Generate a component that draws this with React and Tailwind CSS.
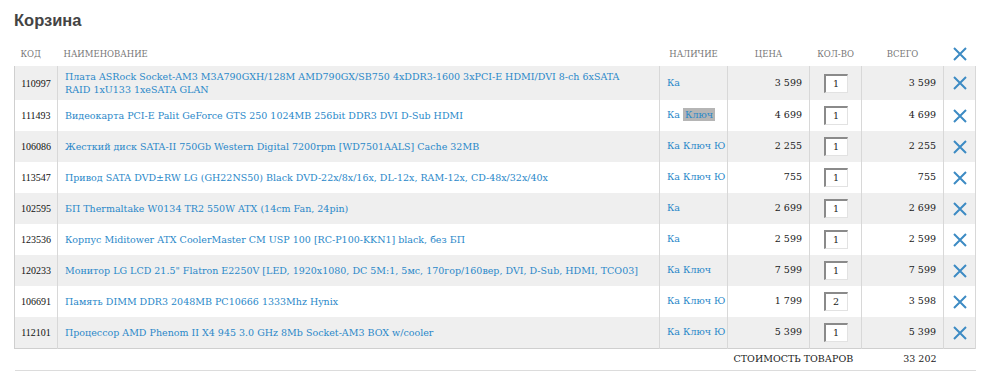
import React from "react";

const rows = [
  { code: "110997", name: "Плата ASRock Socket-AM3 M3A790GXH/128M AMD790GX/SB750 4xDDR3-1600 3xPCI-E HDMI/DVI 8-ch 6xSATA", name2: "RAID 1xU133 1xeSATA GLAN", av: ["Ка"], price: "3 599", qty: "1", total: "3 599", tall: true },
  { code: "111493", name: "Видеокарта PCI-E Palit GeForce GTS 250 1024MB 256bit DDR3 DVI D-Sub HDMI", av: ["Ка", "Ключ*"], price: "4 699", qty: "1", total: "4 699" },
  { code: "106086", name: "Жесткий диск SATA-II 750Gb Western Digital 7200rpm [WD7501AALS] Cache 32MB", av: ["Ка", "Ключ", "Ю"], price: "2 255", qty: "1", total: "2 255" },
  { code: "113547", name: "Привод SATA DVD±RW LG (GH22NS50) Black DVD-22x/8x/16x, DL-12x, RAM-12x, CD-48x/32x/40x", av: ["Ка", "Ключ", "Ю"], price: "755", qty: "1", total: "755" },
  { code: "102595", name: "БП Thermaltake W0134 TR2 550W ATX (14cm Fan, 24pin)", av: ["Ка"], price: "2 699", qty: "1", total: "2 699" },
  { code: "123536", name: "Корпус Miditower ATX CoolerMaster CM USP 100 [RC-P100-KKN1] black, без БП", av: ["Ка"], price: "2 599", qty: "1", total: "2 599" },
  { code: "120233", name: "Монитор LG LCD 21.5\" Flatron E2250V [LED, 1920x1080, DC 5M:1, 5мс, 170гор/160вер, DVI, D-Sub, HDMI, TCO03]", av: ["Ка", "Ключ"], price: "7 599", qty: "1", total: "7 599" },
  { code: "106691", name: "Память DIMM DDR3 2048MB PC10666 1333Mhz Hynix", av: ["Ка", "Ключ", "Ю"], price: "1 799", qty: "2", total: "3 598" },
  { code: "112101", name: "Процессор AMD Phenom II X4 945 3.0 GHz 8Mb Socket-AM3 BOX w/cooler", av: ["Ка", "Ключ", "Ю"], price: "5 399", qty: "1", total: "5 399" },
];

function XIcon() {
  return (
    <svg width="14" height="14" viewBox="0 0 14 14" className="inline-block">
      <path d="M1 1 L13 13 M13 1 L1 13" stroke="#3d8bc4" strokeWidth="2" strokeLinecap="butt" />
    </svg>
  );
}

export default function App() {
  const serif = { fontFamily: '"DejaVu Serif", "Liberation Serif", serif' };
  const times = { fontFamily: '"Liberation Serif", "Times New Roman", serif' };
  return (
    <div className="bg-white w-[986px] h-[378px] overflow-hidden pl-[14px] pr-[11px]">
      <h1 className="pt-[9px] h-[42px] text-[16.5px] leading-[22px] font-bold text-[#444]" style={{ fontFamily: '"Liberation Sans", Arial, sans-serif' }}>
        Корзина
      </h1>
      <table className="w-[961px] border-collapse table-fixed text-[9.5px]" style={serif}>
        <colgroup>
          <col className="w-[43px]" />
          <col className="w-[602px]" />
          <col className="w-[68px]" />
          <col className="w-[82px]" />
          <col className="w-[52px]" />
          <col className="w-[82px]" />
          <col className="w-[32px]" />
        </colgroup>
        <thead>
          <tr className="h-[24px] text-[#777] text-[8.5px]">
            <th className="font-normal text-left pl-[6px]">КОД</th>
            <th className="font-normal text-left pl-[6px]">НАИМЕНОВАНИЕ</th>
            <th className="font-normal text-center">НАЛИЧИЕ</th>
            <th className="font-normal text-center">ЦЕНА</th>
            <th className="font-normal text-center">КОЛ-ВО</th>
            <th className="font-normal text-center">ВСЕГО</th>
            <th className="font-normal text-center"><XIcon /></th>
          </tr>
        </thead>
        <tbody className="border-l border-b border-[#cfcfcf]">
          {rows.map((r, i) => (
            <tr key={r.code} className={(i % 2 === 0 ? "bg-[#efefef] " : "bg-white ") + (r.tall ? "h-[34px]" : "h-[31px]")}>
              <td className="text-center text-[#111] text-[10px] border-r border-[#d8d8d8]" style={times}>{r.code}</td>
              <td className="pl-[7px] pr-[6px] text-[#2a88c9] leading-[13px] border-r border-[#d8d8d8]">
                {r.name}
                {r.name2 && (<><br />{r.name2}</>)}
              </td>
              <td className="pl-[7px] text-[#2a88c9] border-r border-[#d8d8d8] whitespace-nowrap">
                {r.av.map((a, j) => (
                  <React.Fragment key={j}>
                    {j > 0 && " "}
                    {a.endsWith("*") ? <span className="bg-[#b5b5b5] px-[2px] py-[1px]">{a.slice(0, -1)}</span> : a}
                  </React.Fragment>
                ))}
              </td>
              <td className="text-right pr-[7px] text-[#222] border-r border-[#d8d8d8]">{r.price}</td>
              <td className="border-r border-[#d8d8d8]">
                <div className="ml-[14px] w-[24px] h-[19px] bg-white border-t-2 border-l-2 border-t-[#8a8a8a] border-l-[#8a8a8a] border-r border-b border-r-[#e2e2e2] border-b-[#e2e2e2] text-[#222] text-[9.5px] leading-[16px] pl-[7px]">
                  {r.qty}
                </div>
              </td>
              <td className="text-right pr-[7px] text-[#222] border-r border-[#d8d8d8]">{r.total}</td>
              <td className="text-center border-r border-[#d8d8d8]"><XIcon /></td>
            </tr>
          ))}
        </tbody>
        <tfoot>
          <tr className="h-[22px] border-b border-[#dcdcdc] text-[#222]">
            <td colSpan={3}></td>
            <td colSpan={2} className="pl-[6px] whitespace-nowrap text-[9.5px]">СТОИМОСТЬ ТОВАРОВ</td>
            <td className="text-right pr-[7px]">33 202</td>
            <td></td>
          </tr>
        </tfoot>
      </table>
    </div>
  );
}
